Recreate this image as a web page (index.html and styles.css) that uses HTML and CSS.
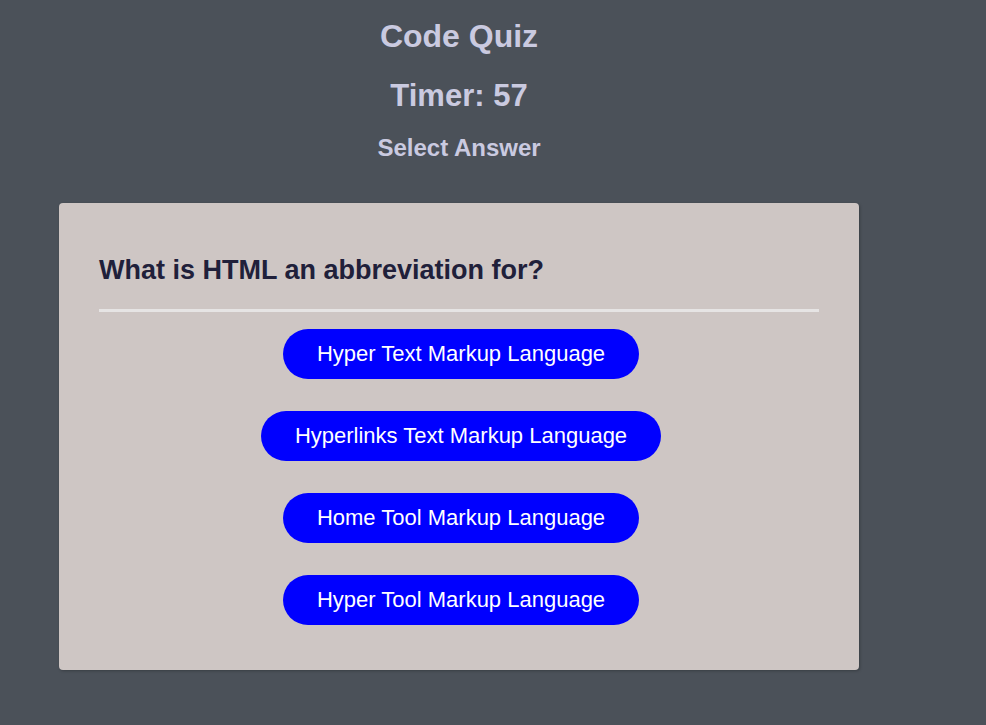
FILE: index.html
```html
<!DOCTYPE html>
<html lang="en">
<head>
<meta charset="utf-8">
<title>Code Quiz</title>
<link rel="stylesheet" href="styles.css">
</head>
<body>
<div class="wrap">
  <header class="head">
    <h1 class="title">Code Quiz</h1>
    <div class="timer">Timer: 57</div>
    <div class="prompt">Select Answer</div>
  </header>
  <main class="card">
    <h2 class="question">What is HTML an abbreviation for?</h2>
    <div class="rule"></div>
    <div class="answers">
      <button class="answer">Hyper Text Markup Language</button>
      <button class="answer">Hyperlinks Text Markup Language</button>
      <button class="answer">Home Tool Markup Language</button>
      <button class="answer">Hyper Tool Markup Language</button>
    </div>
  </main>
</div>
</body>
</html>
```

FILE: styles.css
```css
html, body {
  margin: 0;
  padding: 0;
}
body {
  background: #4b5159;
  font-family: "Liberation Sans", Arial, sans-serif;
  min-height: 725px;
}
.wrap {
  width: 800px;
  margin-left: 59px;
  padding-top: 16px;
}
.head {
  display: flex;
  flex-direction: column;
  align-items: center;
  color: #cacae0;
  font-weight: bold;
}
.title {
  margin: 0;
  font-size: 32px;
  line-height: 40px;
}
.timer {
  margin-top: 20px;
  font-size: 31px;
  line-height: 40px;
}
.prompt {
  margin-top: 17px;
  font-size: 24px;
  line-height: 30px;
}
.card {
  margin-top: 40px;
  background: #cec6c4;
  border-radius: 4px;
  padding: 50px 40px 45px;
  box-shadow: 1px 1px 3px rgba(0,0,0,0.25);
}
.question {
  margin: 0;
  font-size: 27px;
  line-height: 34px;
  color: #20203a;
}
.rule {
  margin-top: 22px;
  height: 3px;
  background: #e6e4e4;
}
.answers {
  margin-top: 17px;
  padding-left: 4px;
  display: flex;
  flex-direction: column;
  align-items: center;
  gap: 32px;
}
.answer {
  height: 50px;
  padding: 0 34px;
  border: none;
  border-radius: 25px;
  background: #0000ff;
  color: #ffffff;
  font-family: "Liberation Sans", Arial, sans-serif;
  font-size: 22px;
}
```
